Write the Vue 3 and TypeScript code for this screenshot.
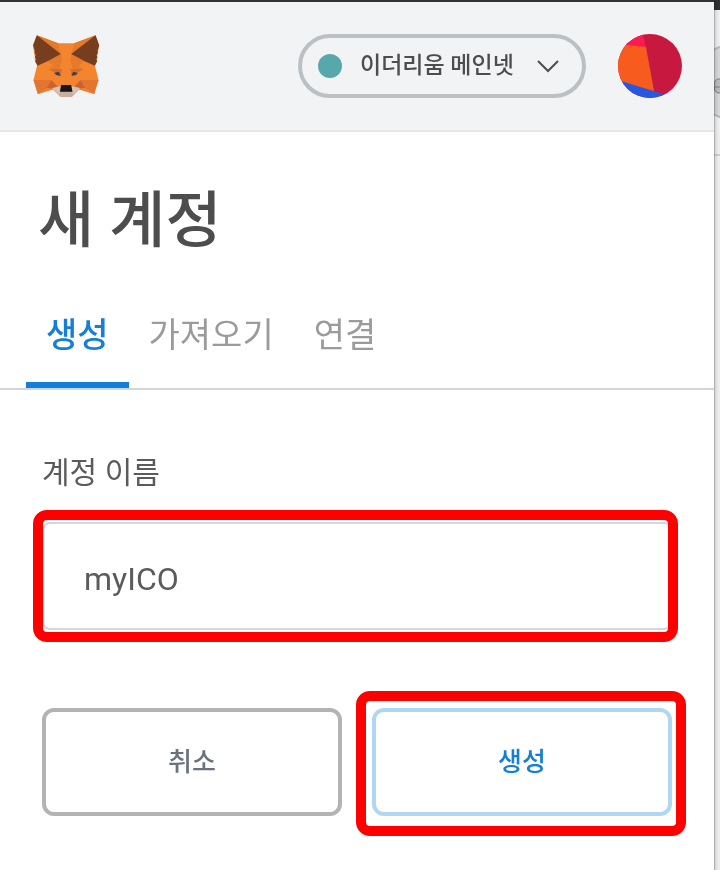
<script setup lang="ts">
import { ref } from 'vue'

const networks: string[] = ['이더리움 메인넷']
const network = ref<string>(networks[0])
const tabs: string[] = ['생성', '가져오기', '연결']
const activeTab = ref<string>(tabs[0])
const accountName = ref<string>('myICO')
</script>

<template>
  <div class="window">
    <div class="popup">
      <header class="header">
        <svg class="fox" viewBox="39 45 201 186" role="img" aria-label="MetaMask">
          <path fill="#f4852f" d="M52 46 116 70H164L228 46 239 76 233 110V122L226 136 237 180 224 222 178 208 157 230H123L101 208 55 222 42 180 53 136 46 122V110L40 76Z" />
          <path fill="#e57a2c" d="M52 46 116 70 124 102ZM228 46 164 70 156 102ZM84 124 124 102 128 120 120 146H88L104 137ZM196 124 156 102 152 120 160 146H192L176 137Z" />
          <path fill="#e27630" d="M42 180H96L82 205 55 222ZM237 180H183L197 205 224 222Z" />
          <path fill="#ec8033" d="M82 205 115 200 101 208 55 222ZM197 205 164 200 178 208 224 222Z" />
          <path fill="#cb6231" d="M82 204 96 180 115 200 101 205ZM197 204 183 180 164 200 178 205Z" />
          <path fill="#d66c2e" d="M88 147H127L124 168 104 157ZM192 147H153L156 168 176 157Z" />
          <path fill="#763e1f" d="M52 46 124 102 84 124 54 137 47 124 50 118 46 112 49 106 45 98 46 92 41 76ZM228 46 155 102 196 124 226 137 233 124 230 118 234 112 231 106 235 98 234 92 239 76Z" />
          <path fill="#2f4350" d="M104 159 118 155 123 168 110 165ZM175 159 161 155 156 168 169 165Z" />
          <path fill="#c7b0a2" d="M99 204 123 216H157L181 204 178 210 157 230H123L101 210Z" />
          <path fill="#d7c1b5" d="M99 204 124 198V216L118 222ZM181 204 156 198V216L162 222Z" />
          <path fill="#1a1614" d="M125 195H155L159 215H121Z" />
        </svg>
        <div class="network">
          <span class="dot"></span>
          <select v-model="network" class="network-select" aria-label="네트워크">
            <option v-for="item in networks" :key="item" :value="item">{{ item }}</option>
          </select>
          <svg class="chevron" viewBox="0 0 22 13" aria-hidden="true">
            <path d="M1 1 11 11 21 1" fill="none" stroke="#4d4d4d" stroke-width="2" />
          </svg>
        </div>
        <button class="avatar" type="button" aria-label="내 계정">
          <svg viewBox="0 0 64 64" aria-hidden="true">
            <defs><clipPath id="disc"><circle cx="32" cy="32" r="32" /></clipPath></defs>
            <g clip-path="url(#disc)">
              <path fill="#c7193f" d="M0 0H64V64H0Z" />
              <path fill="#fc1b50" d="M0 0H25L28 14 0 12Z" />
              <path fill="#f75b1e" d="M0 10 28 13 36 57 0 50Z" />
              <path fill="#2857e0" d="M0 46 64 66H0Z" />
            </g>
          </svg>
        </button>
      </header>

      <main>
        <h1 class="title">새 계정</h1>
        <div class="tabs" role="tablist">
          <button
            v-for="tab in tabs"
            :key="tab"
            type="button"
            role="tab"
            class="tab"
            :class="{ active: tab === activeTab }"
            :aria-selected="tab === activeTab"
            @click="activeTab = tab"
          >{{ tab }}</button>
        </div>

        <form class="form" @submit.prevent>
          <label class="label" for="account-name">계정 이름</label>
          <div class="field">
            <input id="account-name" v-model="accountName" class="input" type="text" autocomplete="off" />
            <span class="mark mark-field"></span>
          </div>
          <div class="actions">
            <button class="button cancel" type="button">취소</button>
            <div class="confirm-box">
              <button class="button confirm" type="submit">생성</button>
              <span class="mark mark-confirm"></span>
            </div>
          </div>
        </form>
      </main>
    </div>
    <div class="behind" aria-hidden="true">
      <svg class="behind-art" width="6" height="160" viewBox="0 0 6 160">
        <path fill="#2f3336" d="M0 0H6V10H0Z" />
        <circle cx="18" cy="82" r="37" fill="#e6e6e6" stroke="#c6c6c6" stroke-width="2" />
        <path d="M6 79H4Q0 80 0 86T4 93H6M0 87H6" fill="#c8c8c8" stroke="#8b8b8b" />
        <path fill="#dedede" d="M0 154H6V156H0Z" />
      </svg>
    </div>
  </div>
</template>

<style>
body {
  margin: 0;
  background: #fff;
}
</style>

<style scoped>
* {
  box-sizing: border-box;
}

.window {
  display: grid;
  grid-template-columns: minmax(0, 1fr) 6px;
  min-height: 100vh;
  font-family: Roboto, "Noto Sans CJK KR", sans-serif;
  color: #4d4d4d;
}

.popup {
  border-top: 2px solid #2f3336;
  background: #fff;
}

.behind {
  background: #f2f2f2;
  box-shadow: inset 1px 0 #b0b0b0, inset 4px 0 4px -2px #c8c8c8;
}

.behind-art {
  display: block;
  mix-blend-mode: multiply;
}

.header {
  display: flex;
  align-items: center;
  height: 130px;
  padding: 0 32px;
  background: #f2f3f4;
  border-bottom: 2px solid #e7e7e7;
}

.fox {
  width: 68px;
  height: 62px;
}

.network {
  position: relative;
  display: flex;
  align-items: center;
  width: 288px;
  height: 64px;
  margin-left: auto;
  padding-left: 16px;
  border: 4px solid #bbc0c5;
  border-radius: 32px;
}

.dot {
  width: 24px;
  height: 24px;
  border-radius: 50%;
  background: #57a8ab;
}

.network-select {
  flex: 1;
  height: 56px;
  padding: 0 0 0 18px;
  border: 0;
  background: none;
  appearance: none;
  font: 500 23px/56px Roboto, "Noto Sans CJK KR", sans-serif;
  color: #4d4d4d;
}

.chevron {
  position: absolute;
  right: 23px;
  width: 22px;
  height: 13px;
  pointer-events: none;
}

.avatar {
  width: 64px;
  height: 64px;
  margin-left: 32px;
  padding: 0;
  border: 0;
  border-radius: 50%;
  background: none;
}

.avatar svg {
  display: block;
}

.title {
  margin: 0;
  padding: 44px 38px 0;
  font-size: 61px;
  font-weight: 500;
  line-height: 90px;
}

.tabs {
  display: flex;
  height: 124px;
  padding: 40px 26px 0;
  border-bottom: 2px solid #d2d6da;
}

.tab {
  padding: 0 20px 18px;
  border: 0;
  border-bottom: 6px solid transparent;
  background: none;
  font: 400 34px/48px Roboto, "Noto Sans CJK KR", sans-serif;
  color: #9b9b9b;
}

.tab.active {
  border-color: #147fd6;
  font-weight: 500;
  color: #147fd6;
}

.form {
  padding: 60px 42px;
}

.label {
  display: block;
  height: 72px;
  font-size: 30px;
  line-height: 46px;
  color: #5b5b5b;
}

.field {
  position: relative;
}

.input {
  display: block;
  width: 100%;
  height: 108px;
  padding: 6px 40px 0;
  border: 2px solid #d2d8dd;
  border-radius: 8px;
  background: #fff;
  outline: 0;
  font: 400 32px/40px Roboto, "Noto Sans CJK KR", sans-serif;
  color: #5b5b5b;
}

.mark {
  position: absolute;
  border: 10px solid #f00;
  border-radius: 14px;
  pointer-events: none;
}

.mark-field {
  inset: -12px -6px -12px -9px;
}

.mark-confirm {
  inset: -17px -14px -20px -16px;
}

.actions {
  display: grid;
  grid-template-columns: 1fr 1fr;
  gap: 30px;
  margin-top: 78px;
}

.confirm-box {
  position: relative;
}

.button {
  display: block;
  width: 100%;
  height: 108px;
  border: 4px solid #b3b3b3;
  border-radius: 12px;
  background: #fff;
  font: 500 26px/40px Roboto, "Noto Sans CJK KR", sans-serif;
  color: #6a737d;
}

.confirm {
  border-color: #b0d7f2;
  color: #147fd6;
}
</style>
